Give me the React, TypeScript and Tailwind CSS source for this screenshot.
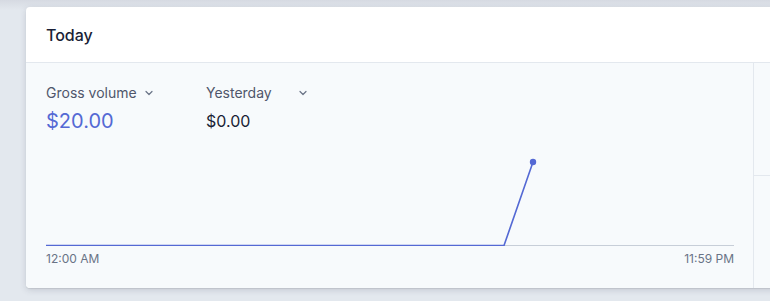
import React from "react";

function Chevron() {
  return (
    <svg width="10" height="10" viewBox="0 0 10 10" className="text-[#697386]">
      <path d="M2 3.5 L5 6.5 L8 3.5" fill="none" stroke="currentColor" strokeWidth="1.2" strokeLinecap="round" strokeLinejoin="round" />
    </svg>
  );
}

function Chart() {
  return (
    <svg width="688" height="100" viewBox="0 0 688 100" className="block mt-[11px]">
      <line x1="458" y1="99.5" x2="688" y2="99.5" stroke="#c7ced8" strokeWidth="1" />
      <polyline points="0,99.5 458,99.5 487,16" fill="none" stroke="#5469d4" strokeWidth="1.6" strokeLinejoin="round" />
      <circle cx="487" cy="16" r="3.2" fill="#5469d4" />
    </svg>
  );
}

export default function App() {
  return (
    <div
      className="w-[770px] h-[301px] overflow-hidden bg-[linear-gradient(to_bottom,#d6dae2_0px,#e3e8ee_10px)] pt-[7px] pl-[26px]"
      style={{ fontFamily: "Inter, 'Noto Sans', sans-serif" }}
    >
      <div className="w-[780px] rounded-l-[4px] bg-white shadow-[0_2px_6px_rgba(60,66,87,0.18),0_1px_1px_rgba(0,0,0,0.08)] overflow-hidden">
        <div className="h-[56px] flex items-center px-5 border-b border-[#e3e8ee]">
          <span className="text-[16px] font-medium text-[#1a1f36]">Today</span>
        </div>
        <div className="flex bg-[#f7fafc]">
          <div className="w-[727px] pl-5 pr-[19px] pt-5 pb-[21px]">
            <div className="flex">
              <div className="w-[160px]">
                <div className="flex items-center gap-[7px] text-[14px] leading-5 text-[#4f566b]">
                  Gross volume <Chevron />
                </div>
                <div className="mt-1 text-[20px] leading-7 text-[#5469d4]">$20.00</div>
              </div>
              <div>
                <div className="w-[102px] flex items-center justify-between text-[14px] leading-5 text-[#4f566b]">
                  Yesterday <Chevron />
                </div>
                <div className="mt-1 text-[16px] leading-7 text-[#1a1f36]">$0.00</div>
              </div>
            </div>
            <Chart />
            <div className="mt-[5px] flex justify-between text-[12px] leading-4 text-[#697386]">
              <span>12:00 AM</span>
              <span>11:59 PM</span>
            </div>
          </div>
          <div className="flex-1 border-l border-[#e3e8ee]">
            <div className="h-[113px] border-b border-[#e3e8ee]" />
          </div>
        </div>
      </div>
    </div>
  );
}
